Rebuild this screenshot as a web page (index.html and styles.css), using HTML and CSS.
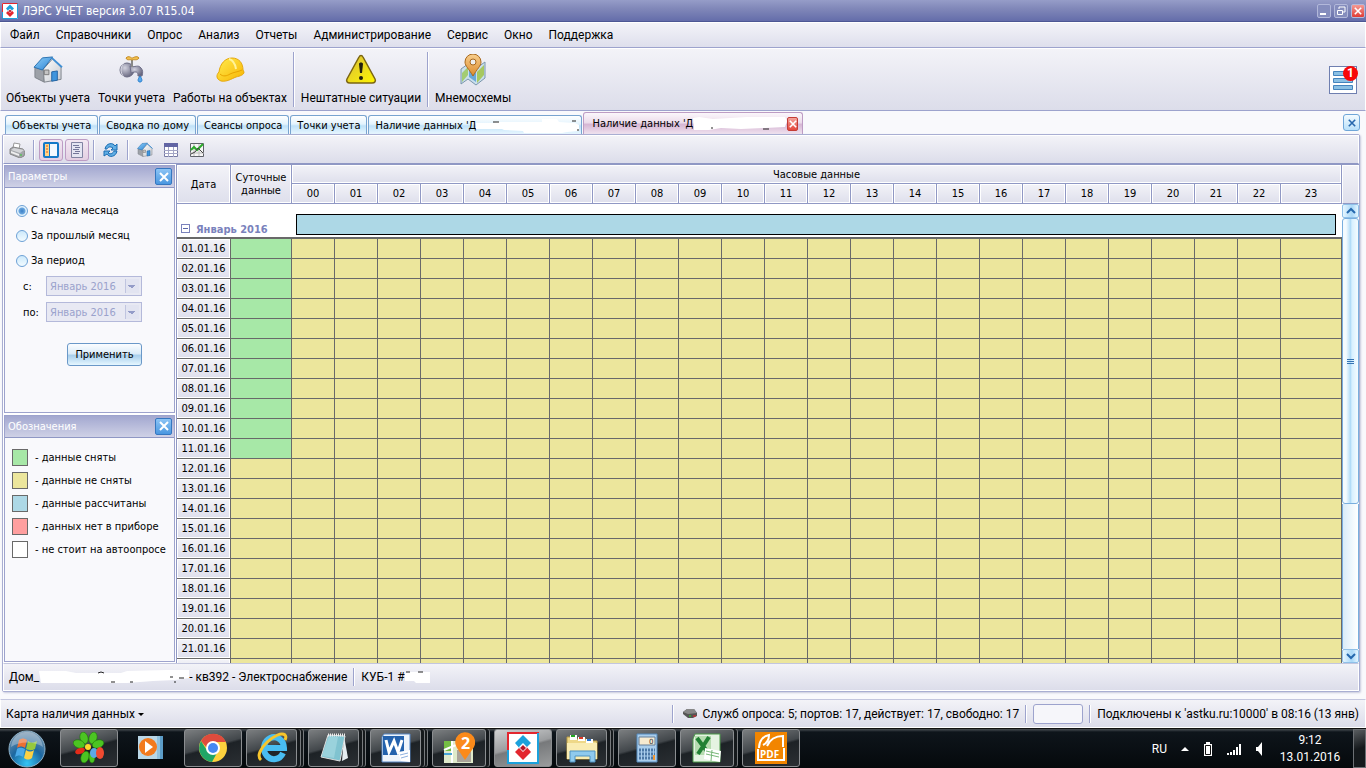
FILE: index.html
```
<!DOCTYPE html>
<html lang="ru">
<head>
    <meta charset="UTF-8">
    <meta name="viewport" content="width=device-width, initial-scale=1.0">
    <title>ЛЭРС УЧЕТ версия 3.07 R15.04</title>
    <link rel="stylesheet" href="styles.css">
</head>
<body>

    <svg class="defs" width="0" height="0" aria-hidden="true">
        <defs>
            <linearGradient id="gBlue" x1="0" y1="0" x2="1" y2="1"><stop offset="0" stop-color="#8fd0f8"/><stop offset="1" stop-color="#2b82d4"/></linearGradient>
            <linearGradient id="gWall" x1="0" y1="0" x2="1" y2="1"><stop offset="0" stop-color="#ffffff"/><stop offset="1" stop-color="#c4c8ce"/></linearGradient>
            <linearGradient id="gYellow" x1="0" y1="0" x2="1" y2="1"><stop offset="0" stop-color="#ffec50"/><stop offset="1" stop-color="#f8b400"/></linearGradient>
            <linearGradient id="gWarn" x1="0" y1="0" x2="1" y2="1"><stop offset="0" stop-color="#d9bd3c"/><stop offset="1" stop-color="#fff600"/></linearGradient>
            <linearGradient id="gOrange" x1="0" y1="0" x2="0" y2="1"><stop offset="0" stop-color="#f8cf8e"/><stop offset="1" stop-color="#dc8a2c"/></linearGradient>
            <radialGradient id="gMetal" cx=".35" cy=".35" r=".7"><stop offset="0" stop-color="#d2d2df"/><stop offset="1" stop-color="#66667e"/></radialGradient>
            <radialGradient id="gOrb" cx=".5" cy=".9" r=".9"><stop offset="0" stop-color="#35c5f5"/><stop offset=".5" stop-color="#1c67a0"/><stop offset="1" stop-color="#7c97ae"/></radialGradient>
            <symbol id="lers" viewBox="0 0 32 32">
                <rect width="32" height="32" fill="#fff"/>
                <path d="M1 32V1h31" fill="none" stroke="#e3262e" stroke-width="2"/>
                <path d="M1 18v13h30V1" fill="none" stroke="#1ba1dc" stroke-width="2"/>
                <path d="M16 3l8 8-4 4-4-4-4 4 2 3-6-7z" fill="#1ba1dc"/>
                <path d="M16 28l-8-8 4-4 4 4 4-4-2-3 6 7z" fill="#e3262e"/>
                <path d="M16 13l3 3-3 3-3-3z" fill="#b5172a"/>
            </symbol>
            <symbol id="house" viewBox="0 0 32 30">
                <path d="M2 12l9 3 1 13-10-5z" fill="#9da1a8" stroke="#7d828a"/>
                <path d="M11 14L21 3l9 9v13l-18 3z" fill="url(#gWall)" stroke="#7d828a"/>
                <path d="M1 12l9-10 11-1-11 14z" fill="url(#gBlue)" stroke="#276fae"/>
                <path d="M20 2l11 10" fill="none" stroke="#3f8fd4" stroke-width="2"/>
                <path d="M20 17l6-1v10l-6 1z" fill="#3f95dd" stroke="#1f62a4"/>
                <path d="M12 15h5v5h-5z" fill="#c4c4c4" stroke="#777"/>
            </symbol>
            <symbol id="cross" viewBox="0 0 10 10">
                <path d="M1 1l8 8M9 1L1 9" fill="none" stroke="currentColor" stroke-width="2"/>
            </symbol>
        </defs>
    </svg>

    <header class="titlebar">
        <svg class="app-icon" width="16" height="16"><use href="#lers"/></svg>
        <span class="app-title">ЛЭРС УЧЕТ версия 3.07 R15.04</span>
        <div class="win-buttons">
            <button class="win-btn" aria-label="Свернуть"><svg width="10" height="10"><path d="M1 8h6" stroke="#fff" stroke-width="2"/></svg></button>
            <button class="win-btn" aria-label="Восстановить"><svg width="10" height="10"><path d="M3 3V1h6v5H7" fill="none" stroke="#fff"/><path d="M1.500 4.500h5v4h-5z" fill="none" stroke="#fff"/></svg></button>
            <button class="win-btn win-close" aria-label="Закрыть"><svg width="8" height="8"><use href="#cross"/></svg></button>
        </div>
    </header>

    <nav class="menu">
        <a href="#">Файл</a>
        <a href="#">Справочники</a>
        <a href="#">Опрос</a>
        <a href="#">Анализ</a>
        <a href="#">Отчеты</a>
        <a href="#">Администрирование</a>
        <a href="#">Сервис</a>
        <a href="#">Окно</a>
        <a href="#">Поддержка</a>
    </nav>

    <div class="toolbar">
        <button class="tool"><svg width="32" height="32"><use href="#house" x="0" y="2" width="32" height="28"/></svg>Объекты учета</button>
        <button class="tool">
            <svg width="32" height="32" viewBox="0 0 32 32">
                <circle cx="11" cy="16" r="7" fill="url(#gMetal)" stroke="#6c6c84"/>
                <path d="M14 12c5 2 8-2 11 2 2 2 2 5 1 8h-4c0-4-1-5-7-3z" fill="url(#gMetal)" stroke="#70708a"/>
                <path d="M8 9c-4 4-4 10 0 14" fill="none" stroke="#dedee8"/>
                <path d="M15 6h2v7h-2z" fill="#888"/>
                <path d="M10 4c3-3 5 0 6 0s5-3 7 0c-2 3-5 1-7 2-2-1-5 1-6-2z" fill="#f3c04e" stroke="#c48a20"/>
                <path d="M24 22c3 4 2 6 0 6s-3-2 0-6z" fill="#56a8f0" stroke="#287dc8"/>
            </svg>Точки учета</button>
        <button class="tool">
            <svg width="32" height="32" viewBox="0 0 32 32">
                <path d="M5 18C6 10 11 4 18 4c7 0 11 5 11 12l1 2c0 3-4 4-8 5-5 2-9 5-15 4-5-2-5-6-2-9z" fill="url(#gYellow)" stroke="#e6a80c"/>
                <path d="M6 20c3 3 7 2 10 0 4-2 8-2 12-4" fill="none" stroke="#e8a400"/>
                <path d="M15 5c4 1 6 4 7 10" fill="none" stroke="#fff39a" stroke-width="2"/>
            </svg>Работы на объектах</button>
        <span class="sep"></span>
        <button class="tool">
            <svg width="32" height="32" viewBox="0 0 32 32">
                <path d="M14 3c1-2 3-2 4 0l12 22c1 2 0 4-3 4H5c-3 0-4-2-3-4z" fill="url(#gWarn)" stroke="#7b6511" stroke-width="1.5"/>
                <path d="M14 10c0-2 4-2 4 0l-1 9h-2z" fill="#221f10"/><circle cx="16" cy="24" r="2" fill="#221f10"/>
            </svg>Нештатные ситуации</button>
        <span class="sep"></span>
        <button class="tool">
            <svg width="32" height="32" viewBox="0 0 32 32">
                <path d="M4 15l7-5 7 5 10-7v16l-9 7-8-6-7 5z" fill="#c9dfed" stroke="#7b96ab"/>
                <path d="M5 19l6-6v8l-6 7z" fill="#a3cc72"/><path d="M12 13l7 6v9l-7-5z" fill="#6aa8d8"/><path d="M20 18l7-7v10l-7 8z" fill="#a6c860"/>
                <path d="M16 22C12 15 8 12 8 8a8 8 0 0 1 16 0c0 4-4 7-8 14z" fill="url(#gOrange)" stroke="#a8691e"/>
                <circle cx="16" cy="8" r="3" fill="#eee" stroke="#a8691e"/>
            </svg>Мнемосхемы</button>
        <button class="notices" aria-label="Уведомления">
            <svg width="22" height="22" viewBox="0 0 22 22"><g fill="#8ac0e4" stroke="#4484bd"><path d="M1.500 2.500h19v4h-19zM1.500 9.500h19v4h-19zM1.500 16.500h19v4h-19z"/></g></svg>
            <span class="badge">1</span>
        </button>
    </div>

    <div class="tabs">
        <button class="tab">Объекты учета</button>
        <button class="tab">Сводка по дому</button>
        <button class="tab">Сеансы опроса</button>
        <button class="tab">Точки учета</button>
        <button class="tab tab-wide">Наличие данных 'Д
            <svg class="smudge" width="106" height="16" viewBox="0 0 106 16">
                <path d="M0 6h18l2-1h46V2h15l2 3 16 1 4 2v6l-12 1-5 1H48l-1-2-19-1-2-1H0z" fill="#fff"/>
                <path d="M17 5h6M96 4h4M102 12v2" stroke="#222"/>
            </svg>
        </button>
        <button class="tab tab-active">Наличие данных 'Д
            <svg class="smudge" width="94" height="14" viewBox="0 0 94 14">
                <path d="M0 1l6-1 14 2 34-2h38l2 4-2 6-20 1-24 1-20-1-12 2H1z" fill="#fff"/>
                <path d="M19 10v2M70 12h6" stroke="#222"/>
            </svg>
            <span class="tab-close"><svg width="8" height="8"><use href="#cross"/></svg></span>
        </button>
        <button class="close-all" aria-label="Закрыть вкладку"><svg width="8" height="8"><use href="#cross"/></svg></button>
    </div>

    <main class="doc">
        <div class="doc-tools">
            <button class="mini" aria-label="Печать">
                <svg width="16" height="16"><path d="M4 6l1-5 6 1-1 5z" fill="#fff" stroke="#999"/><path d="M1 7l3-2 10 2 2 3-1 4-4 2-10-4z" fill="#a3a5aa" stroke="#888"/><path d="M2 8l9 3 4-3-10-2z" fill="#d4d5d8"/><path d="M2 11l8 3v-2l-8-3z" fill="#eee"/><path d="M11 13h2" stroke="#3c3"/></svg>
            </button>
            <span class="sep"></span>
            <button class="mini pressed" aria-label="Параметры">
                <svg width="16" height="16"><rect x="1" y="1" width="14" height="14" rx="1" fill="#f3f9ff" stroke="#1479c8" stroke-width="2"/><path d="M2 2h4v12H2z" fill="#ffd486"/><path d="M6.500 2v12" stroke="#1479c8"/><path d="M3 4h2M3 7h2M3 10h2" stroke="#e15b1e"/></svg>
            </button>
            <button class="mini pressed" aria-label="Обозначения">
                <svg width="16" height="16"><path d="M2.500.5h11v15h-11z" fill="#e4e5f2" stroke="#8083a2"/><path d="M4 3.500h6M6 5.500h5M4 7.500h6M6 9.500h5M4 11.500h6" stroke="#73769a"/></svg>
            </button>
            <span class="sep"></span>
            <button class="mini" aria-label="Обновить">
                <svg width="16" height="16"><path d="M2 7c1-6 8-7 10-3l2-2v6H8l2-2C7 4 5 5 4 7z" fill="#61aee4" stroke="#1b6cb2"/><path d="M14 9c-1 6-8 7-10 3l-3 2V9h6l-2 2c3 2 5 0 6-2z" fill="#61aee4" stroke="#1b6cb2"/></svg>
            </button>
            <span class="sep"></span>
            <button class="mini" aria-label="Объект"><svg width="16" height="16"><use href="#house"/></svg></button>
            <button class="mini mini-gap" aria-label="Таблица">
                <svg width="16" height="16"><path d="M1.500 1.500h13v13h-13z" fill="#fff" stroke="#777aa5"/><path d="M1 1h14v4H1z" fill="#6265a4"/><path d="M1 8.500h14M1 11.500h14M5.500 5v10M10.500 5v10" stroke="#a4a6c6"/></svg>
            </button>
            <button class="mini mini-gap" aria-label="График">
                <svg width="16" height="16"><path d="M1.500 1.500h13v13h-13z" fill="#f7f7f7" stroke="#60636b"/><path d="M1 11h14M5 2v12M10 2v12" stroke="#bbb"/><path d="M2 8l3-3 3 3 6-6" fill="none" stroke="#2bab2b" stroke-width="2"/><path d="M2 12l4-2 3-4 5 5" fill="none" stroke="#444"/></svg>
            </button>
        </div>

        <div class="workspace">
            <aside class="sidebar">
                <section class="panel">
                    <h2>Параметры <button class="panel-close" aria-label="Закрыть"><svg width="10" height="10"><use href="#cross"/></svg></button></h2>
                    <form class="params">
                        <label class="radio"><input type="radio" name="period" checked>С начала месяца</label>
                        <label class="radio"><input type="radio" name="period">За прошлый месяц</label>
                        <label class="radio"><input type="radio" name="period">За период</label>
                        <div class="month">
                            <label for="from">с:</label>
                            <select id="from" disabled><option>Январь 2016</option></select>
                        </div>
                        <div class="month">
                            <label for="to">по:</label>
                            <select id="to" disabled><option>Январь 2016</option></select>
                        </div>
                        <button type="button" class="apply">Применить</button>
                    </form>
                </section>
                <section class="panel">
                    <h2>Обозначения <button class="panel-close" aria-label="Закрыть"><svg width="10" height="10"><use href="#cross"/></svg></button></h2>
                    <ul class="legend">
                        <li><i class="taken"></i>- данные сняты</li>
                        <li><i class="missing"></i>- данные не сняты</li>
                        <li><i class="computed"></i>- данные рассчитаны</li>
                        <li><i class="absent"></i>- данных нет в приборе</li>
                        <li><i></i>- не стоит на автоопросе</li>
                    </ul>
                </section>
            </aside>

            <div class="grid-area">
                <table id="tabla">
                    <colgroup id="cols"><col class="col-date"><col class="col-day"></colgroup>
                    <thead>
                        <tr>
                            <th rowspan="2">Дата</th>
                            <th rowspan="2">Суточные данные</th>
                            <th colspan="24">Часовые данные</th>
                        </tr>
                        <tr id="hours"></tr>
                    </thead>
                    <tbody id="days">
                        <tr class="group">
                            <td colspan="26">
                                <div class="group-row">
                                    <button class="expander" aria-label="Свернуть группу"></button>
                                    <span>Январь 2016</span>
                                    <div class="group-bar"></div>
                                </div>
                            </td>
                        </tr>
                    </tbody>
                </table>
            </div>

            <div class="scroll">
                <div class="scroll-corner"></div>
                <button class="scroll-btn" aria-label="Вверх"><svg width="10" height="8"><path d="M1 6l4-4 4 4" fill="none" stroke="#2568ae" stroke-width="2"/></svg></button>
                <div class="scroll-thumb"></div>
                <div class="scroll-track"></div>
                <button class="scroll-btn" aria-label="Вниз"><svg width="10" height="8"><path d="M1 2l4 4 4-4" fill="none" stroke="#2568ae" stroke-width="2"/></svg></button>
            </div>
        </div>

        <div class="doc-status">
            <span>Дом_</span>
            <svg width="150" height="14" viewBox="0 0 150 14">
                <path d="M0 1h27l10 2h45l6-2 40-1h22v8l-14 2-22 1-26 2H2z" fill="#fff"/>
                <path d="M59 3l3-1 3 1M72 12h4M91 12h3M131 7h3M140 8h5M136 11v2" fill="none" stroke="#222"/>
            </svg>
            <span>- кв392 - Электроснабжение</span>
            <span class="sep"></span>
            <span>КУБ-1 #</span>
            <svg width="26" height="14" viewBox="0 0 26 14">
                <path d="M0 3l6-1h19v11H11l-2-2H0z" fill="#fff"/><path d="M1 2h4M13 2h5" stroke="#222"/>
            </svg>
        </div>
    </main>

    <footer class="statusbar">
        <button class="view-menu">Карта наличия данных <i class="caret"></i></button>
        <span class="sep push"></span>
        <svg class="modem" width="14" height="10"><path d="M0 3l4-3h7l3 4v3l-4 2H5L0 5z" fill="#555"/><path d="M0 3l4-3h7l3 4-9 1z" fill="#888"/><path d="M6 7h2" stroke="#2d2"/><path d="M10 7h3" stroke="#e22"/></svg>
        <span>Служб опроса: 5; портов: 17, действует: 17, свободно: 17</span>
        <span class="sep"></span>
        <span class="progress"></span>
        <span class="sep"></span>
        <span>Подключены к 'astku.ru:10000' в 08:16 (13 янв)</span>
    </footer>

    <div class="taskbar">
        <button class="start" aria-label="Пуск">
            <svg width="38" height="38" viewBox="0 0 38 38"><circle cx="19" cy="19" r="18" fill="url(#gOrb)" stroke="#8fb3c9"/>
                <path d="M11 10c3-2 5-2 8 0l-2 8c-3-2-5-2-8 0z" fill="#ed6f32"/><path d="M20 11c3 2 5 2 9 0l-2 8c-4 2-6 1-9 0z" fill="#95c83d"/>
                <path d="M9 19c3-2 5-1 8 0l-2 8c-3-2-5-2-8 0z" fill="#4ba9e8"/><path d="M18 20c3 2 5 2 8 0l-2 8c-3 2-5 2-8 0z" fill="#fcd144"/>
                <path d="M3 17C5 4 14 2 19 2s14 2 16 15C27 11 11 11 3 17z" fill="#fff" opacity=".3"/></svg>
        </button>
        <button class="task" aria-label="ICQ">
            <svg width="32" height="32" viewBox="0 0 32 32"><g fill="#4cc422" stroke="#167005" stroke-width=".5"><ellipse cx="11" cy="6" rx="4" ry="6" transform="rotate(-15 11 6)"/><ellipse cx="20" cy="6" rx="4" ry="6" transform="rotate(15 20 6)"/><ellipse cx="25" cy="12" rx="4" ry="6" transform="rotate(70 25 12)"/><ellipse cx="6" cy="12" rx="4" ry="6" transform="rotate(-70 6 12)"/><ellipse cx="12" cy="25" rx="4" ry="6" transform="rotate(20 12 25)"/><ellipse cx="19" cy="25" rx="3" ry="6"/></g><ellipse cx="7" cy="19" rx="5" ry="3" fill="#e42b19" transform="rotate(-20 7 19)"/><circle cx="15" cy="15" r="3" fill="#ffd62a"/><ellipse cx="21" cy="21" rx="4" ry="5" fill="#5ca8e8"/><ellipse cx="27" cy="21" rx="4" ry="6" fill="#f04a30"/></svg>
        </button>
        <button class="task plain" aria-label="Проигрыватель">
            <svg width="28" height="26" viewBox="0 0 28 26"><path d="M7 1h19v23H7z" fill="#5c9dc8"/><path d="M4 1h19v23H4z" fill="#91c2df"/><path d="M1 1h19v23H1z" fill="#bad7e7"/><circle cx="11" cy="12" r="9" fill="#f27a1e"/><path d="M8 6l8 6-8 6z" fill="#fff"/></svg>
        </button>
        <button class="task" aria-label="Chrome">
            <svg width="30" height="30" viewBox="0 0 30 30"><circle cx="15" cy="15" r="14" fill="#fdd23e"/><path d="M3 8a14 14 0 0 1 25 1H15l-6 6z" fill="#de4b3d"/><path d="M3 8a14 14 0 0 0 11 21l6-11-10 1z" fill="#20a566"/><circle cx="15" cy="15" r="7" fill="#fff"/><circle cx="15" cy="15" r="5" fill="#4688f1"/></svg>
        </button>
        <button class="task stack" aria-label="Internet Explorer">
            <svg width="32" height="32" viewBox="0 0 32 32"><path d="M27 21A10 11 0 1 1 28 16H10" fill="none" stroke="#49bdf2" stroke-width="6"/><path d="M5 28C-4 20 22-3 29 3c1 1 1 3 0 5" fill="none" stroke="#f7c52b" stroke-width="3"/></svg>
        </button>
        <button class="task stack" aria-label="Блокнот">
            <svg width="32" height="32" viewBox="0 0 32 32"><path d="M26 4l4 22-6 3z" fill="#e6edf0"/><path d="M10 3l17 1-5 25-19-4z" fill="#80c3d0" stroke="#ddd"/><path d="M11 4l9 1-4 21-12-2z" fill="#b4e1e8" opacity=".5"/><path d="M10 3h17" stroke="#eee" stroke-width="3" stroke-dasharray="1 1"/></svg>
        </button>
        <button class="task stack" aria-label="Word">
            <svg width="30" height="30" viewBox="0 0 30 30"><path d="M3 1h26v28H1V4z" fill="#eef4fb" stroke="#5786c3"/><path d="M2 3h21v19H2z" fill="#2462ad"/><path d="M5 7l3 12 5-11 4 11 4-12" fill="none" stroke="#fff" stroke-width="3"/><path d="M17 19l12-2v12l-9-1z" fill="#fff"/><path d="M19 22l8-2M20 25l7-2" stroke="#8fb1df"/></svg>
        </button>
        <button class="task stack stack-one" aria-label="2ГИС">
            <svg width="32" height="32" viewBox="0 0 32 32"><path d="M1 9h29v22H1z" fill="#dfeacb"/><path d="M1 9h9v10H1z" fill="#75be44"/><path d="M1 18l12-5M9 31V9" stroke="#fff" stroke-width="2"/><path d="M1 22h8" stroke="#49a5d8" stroke-width="2"/><path d="M14 18h14v12H14z" fill="#aaa399"/><path d="M22 28l-8-12a10 10 0 1 1 17-1z" fill="#fb8a1a"/><text x="18" y="17" class="gis">2</text></svg>
        </button>
        <button class="task current" aria-label="ЛЭРС УЧЕТ"><svg width="32" height="32"><use href="#lers"/></svg></button>
        <button class="task stack" aria-label="Проводник">
            <svg width="32" height="30" viewBox="0 0 32 30"><path d="M1 4h8l2 2h9l1 2h10v18H1z" fill="#eed888" stroke="#b99b44"/><path d="M4 2h7v5H4zM12 4h7v4h-7zM20 6h7v4h-7z" fill="#fff"/><path d="M5 3h4" stroke="#23a823" stroke-width="2"/><path d="M13 5h4" stroke="#dc3826" stroke-width="2"/><path d="M21 7h4" stroke="#2a75d0" stroke-width="2"/><path d="M1 10h30v16H1z" fill="#f9ecb2"/><path d="M4 29V18h25v11h-5v-6H9v6z" fill="#8fcaee" stroke="#4e92c2"/></svg>
        </button>
        <button class="task" aria-label="Калькулятор">
            <svg width="22" height="30" viewBox="0 0 22 30"><path d="M1 1h20v28H1z" fill="#a9cdec" stroke="#558abc"/><path d="M3 4h16v8H3z" fill="#f7ead0" stroke="#657f99"/><text x="13" y="11" class="calc">0</text><path d="M3 17h16M3 21h16M3 25h16" stroke="#4c78a6" stroke-width="3" stroke-dasharray="2 1"/><path d="M17 22h2v5h-2z" fill="#f09733"/></svg>
        </button>
        <button class="task stack stack-one" aria-label="Excel">
            <svg width="30" height="30" viewBox="0 0 30 30"><path d="M3 1h25v28H1V6z" fill="#e5f3e2" stroke="#4c9a4a"/><path d="M3 3h16v19H3z" fill="#b6dcb0"/><path d="M5 5l12 16M17 4L6 21" stroke="#218034" stroke-width="4"/><path d="M13 15l16 3-1 11-16-3z" fill="#fff"/><path d="M14 18l13 3M14 21l13 3M20 17l-1 11" stroke="#78b779"/></svg>
        </button>
        <button class="task" aria-label="PDF">
            <svg width="32" height="32" viewBox="0 0 32 32"><rect width="32" height="32" fill="#f28500"/><path d="M4 16C4 9 8 4 14 3c0 5-2 8-6 10M12 14C15 7 20 4 28 4v11" fill="none" stroke="#fff" stroke-width="2"/><path d="M3 17v11h26V16" fill="none" stroke="#fff" stroke-width="2"/><text x="5" y="26" class="pdf">PDF</text></svg>
        </button>

        <div class="tray">
            <span class="lang">RU</span>
            <svg width="8" height="4"><path d="M0 4l4-4 4 4z" fill="#fff"/></svg>
            <svg width="10" height="14"><path d="M3 0h4v2h2v12H1V2h2z" fill="#fff"/><path d="M2.500 3.500h5v9h-5z" fill="#fff" stroke="#111"/></svg>
            <svg width="14" height="12"><path d="M1 12v-2M4 12V9M7 12V7M10 12V4M13 12V1" stroke="#fff" stroke-width="2"/></svg>
            <svg width="8" height="14"><path d="M1 5h2l4-5v14L3 9H1z" fill="#fff"/></svg>
        </div>
        <div class="clock"><span>9:12</span><span>13.01.2016</span></div>
        <button class="show-desktop" aria-label="Свернуть все окна"></button>
    </div>

    <script>
        const cols = document.getElementById('cols');
        const hours = document.getElementById('hours');
        const days = document.getElementById('days');

        for (let h = 0; h < 24; h++) {
            cols.insertAdjacentHTML('beforeend', `<col class="${h < 23 ? 'col-hour' : 'col-last'}">`);
            hours.insertAdjacentHTML('beforeend', `<th>${String(h).padStart(2, '0')}</th>`);
        }

        // суточные данные сняты по 11 января включительно
        for (let d = 1; d <= 22; d++) {
            const tr = document.createElement('tr');
            const fecha = d <= 21 ? `${String(d).padStart(2, '0')}.01.16` : '';
            tr.innerHTML = `<th>${fecha}</th>`
                + `<td class="${d <= 11 ? 'taken' : 'missing'}"></td>`
                + '<td class="missing"></td>'.repeat(24);
            days.appendChild(tr);
        }
    </script>

</body>
</html>
```
FILE: styles.css
```
* {
    box-sizing: border-box;
}

body {
    margin: 0;
    height: 100vh;
    display: flex;
    flex-direction: column;
    overflow: hidden;
    background: #f9f9fc;
    color: #000;
    font-family: "DejaVu Sans Condensed", "DejaVu Sans", sans-serif;
    font-size: 11px;
}

button {
    font: inherit;
    color: inherit;
    margin: 0;
    padding: 0;
    border: none;
    background: none;
    white-space: nowrap;
}

svg {
    display: block;
    flex: none;
}

.defs {
    position: absolute;
}

.sep {
    flex: none;
    width: 2px;
    background: #9da3cd;
    border-right: 1px solid #fff;
}

/* заголовок окна */
.titlebar {
    flex: none;
    display: flex;
    align-items: center;
    height: 22px;
    padding: 0 1px 0 2px;
    background: linear-gradient(#969dc8, #8188b9 40%, #646daa);
    border-bottom: 1px solid #4d5794;
    color: #fff;
    font-size: 12px;
}

.app-title {
    margin-left: 4px;
}

.win-buttons {
    display: flex;
    gap: 3px;
    margin-left: auto;
}

.win-btn {
    width: 14px;
    height: 14px;
    display: grid;
    place-items: center;
    border: 1px solid #b2b8da;
    border-radius: 2px;
    background: #858dbd;
    color: #fff;
}

.win-close {
    background: linear-gradient(#f49a94, #e03c35);
}

.menu {
    flex: none;
    display: flex;
    align-items: center;
    gap: 16px;
    height: 26px;
    padding: 0 9px;
    background: linear-gradient(#f3f3f8, #dedfec);
    border: 1px solid #fff;
    border-bottom: 1px solid #9da3cd;
    font-family: Roboto, "Noto Sans", sans-serif;
    font-size: 12px;
}

.menu a {
    color: #000;
    text-decoration: none;
}

.toolbar {
    flex: none;
    display: flex;
    height: 63px;
    padding: 3px 8px 3px 1px;
    background: linear-gradient(#f3f3f8, #dcddea);
    border: 1px solid #fff;
    border-bottom: 1px solid #9da3cd;
    font-family: Roboto, "Noto Sans", sans-serif;
    font-size: 12px;
}

.toolbar .sep {
    margin: 0 2px;
}

.tool {
    display: flex;
    flex-direction: column;
    align-items: center;
    gap: 5px;
    padding: 2px 4px 0;
}

.notices {
    position: relative;
    width: 28px;
    height: 28px;
    display: grid;
    place-items: center;
    align-self: center;
    margin-left: auto;
    border: 1px solid #6f7fb0;
    background: #fff;
}

.badge {
    position: absolute;
    top: -1px;
    right: -2px;
    width: 15px;
    height: 15px;
    border-radius: 50%;
    background: #f80808;
    color: #fff;
    font-weight: bold;
    line-height: 15px;
}

/* вкладки */
.tabs {
    flex: none;
    display: flex;
    align-items: flex-end;
    gap: 1px;
    height: 23px;
    padding: 0 6px 0 5px;
}

.tab {
    display: flex;
    align-items: center;
    height: 19px;
    padding: 0 6px;
    border: 1px solid #78a4d0;
    border-bottom: none;
    border-radius: 3px 3px 0 0;
    background: linear-gradient(#fff, #e3f3fd 45%, #bfe1f8 55%, #e8f7ff);
}

.tab-wide {
    width: 214px;
    padding-right: 0;
}

.tab-active {
    width: 220px;
    height: 22px;
    padding: 0 4px 0 8px;
    border-color: #bd9cc4;
    background: linear-gradient(#fbf7fb, #ecdceb 45%, #d6b7d4 55%, #f0e2ef);
}

.tab-close {
    display: grid;
    place-items: center;
    width: 15px;
    height: 14px;
    margin-left: auto;
    border: 1px solid #c43c35;
    border-radius: 2px;
    background: linear-gradient(#f3a39b, #e5473b);
    color: #fff;
}

.close-all {
    display: grid;
    place-items: center;
    width: 17px;
    height: 17px;
    align-self: center;
    margin-left: auto;
    border: 1px solid #6fa6d8;
    border-radius: 3px;
    background: linear-gradient(#f4fbff, #b8e0fa);
    color: #2667ad;
}

/* документ */
.doc {
    flex: 1;
    min-height: 0;
    display: flex;
    flex-direction: column;
    margin: 0 6px 7px 2px;
    border: 1px solid #a9aed2;
    border-radius: 2px;
    background: #fff;
    box-shadow: 1px 1px 2px #c8cade;
}

.doc-tools {
    flex: none;
    display: flex;
    align-items: center;
    height: 29px;
    padding: 0 1px;
    background: linear-gradient(#f3f3f8, #dcddea);
    border: 1px solid #fff;
    border-bottom: 1px solid #8f97c4;
}

.doc-tools .sep {
    height: 20px;
    margin: 0 4px;
}

.mini {
    display: grid;
    place-items: center;
    width: 24px;
    height: 22px;
}

.pressed {
    border: 1px solid #bd9cc4;
    border-radius: 3px;
    background: linear-gradient(#f3e8f3, #e3cfe2);
}

.mini-gap,
.pressed + .pressed {
    margin-left: 2px;
}

.workspace {
    flex: 1;
    min-height: 0;
    display: flex;
}

.sidebar {
    flex: none;
    display: flex;
    flex-direction: column;
    gap: 2px;
    width: 172px;
    padding: 1px 0 1px 1px;
}

.panel {
    flex: 1;
    border: 1px solid #9da3cd;
    background: #f9f9fc;
}

.panel h2 {
    display: flex;
    align-items: center;
    justify-content: space-between;
    height: 22px;
    margin: 0;
    padding: 0 2px 0 3px;
    background: linear-gradient(#a3a8d0, #cfd1e6);
    border-bottom: 1px solid #8f97c4;
    color: #fff;
    font-size: 11px;
    font-weight: normal;
}

.panel-close {
    display: grid;
    place-items: center;
    width: 17px;
    height: 17px;
    border: 1px solid #3577c0;
    border-radius: 2px;
    background: linear-gradient(#8cc4f5, #4a97e0);
    color: #fff;
}

.params {
    display: flex;
    flex-direction: column;
    padding: 10px 0 0 11px;
}

.radio {
    display: flex;
    align-items: center;
    height: 25px;
}

.radio input {
    appearance: none;
    width: 12px;
    height: 12px;
    margin: 0 3px 0 0;
    border: 1px solid #6da1d6;
    border-radius: 50%;
    background: linear-gradient(#cde9fb, #f2fbff);
}

.radio input:checked {
    background: radial-gradient(#3b7fc6 0, #6aa6de 3px, #e3f3fd 4px);
}

.month {
    display: flex;
    align-items: center;
    height: 26px;
    padding-left: 7px;
}

.month label {
    width: 23px;
}

.month select {
    appearance: none;
    width: 96px;
    height: 20px;
    padding: 0 3px;
    border: 1px solid #b4b9da;
    border-radius: 0;
    background:
        linear-gradient(45deg, transparent 50%, #949cc8 50%) 81px 8px / 4px 4px no-repeat,
        linear-gradient(-45deg, transparent 50%, #949cc8 50%) 85px 8px / 4px 4px no-repeat,
        linear-gradient(90deg, #c0c5e0 1px, #e2e4f1 1px) 78px 2px / 14px 14px no-repeat,
        #e8e9f3;
    color: #9aa2cc;
    font: inherit;
    opacity: 1;
}

.apply {
    width: 75px;
    height: 23px;
    margin: 18px 0 0 51px;
    border: 1px solid #6a98c8;
    border-radius: 3px;
    background: linear-gradient(#fbfdff, #dcecf8 45%, #a9cfec 55%, #e6f7ff);
}

.legend {
    margin: 0;
    padding: 8px 0 0 7px;
    list-style: none;
}

.legend li {
    display: flex;
    align-items: center;
    gap: 7px;
    height: 23px;
    white-space: nowrap;
}

.legend i {
    width: 16px;
    height: 17px;
    border: 1px solid #696969;
    background-color: #fff;
}

.legend .taken,
.taken {
    background-color: #a7e8a7;
}

.legend .missing,
.missing {
    background-color: #ece69c;
}

.legend .computed {
    background-color: #add8e6;
}

.legend .absent {
    background-color: #ff9f9f;
}

/* таблица */
.grid-area {
    flex: 1;
    min-width: 0;
    overflow: hidden;
    margin-left: 1px;
    border-top: 1px solid #9098c4;
    border-left: 1px solid #9098c4;
}

table {
    width: 100%;
    table-layout: fixed;
    border-collapse: separate;
    border-spacing: 0;
}

.col-date {
    width: 54px;
}

.col-day {
    width: 61px;
}

.col-hour {
    width: 43px;
}

th, td {
    height: 20px;
    padding: 0;
    border-right: 1px solid #696969;
    border-bottom: 1px solid #696969;
    text-align: center;
}

th {
    background: linear-gradient(#f3f3f8, #dedfec);
    box-shadow: inset 0 0 0 1px #fff;
    font-weight: normal;
    line-height: 13px;
}

thead th {
    border-color: #9098c4;
}

thead tr:first-child th {
    height: 19px;
}

.group td {
    height: 35px;
    border-bottom: 2px solid #696969;
    border-right: none;
}

.group-row {
    display: flex;
    align-items: flex-end;
    height: 33px;
    padding: 0 6px 2px 4px;
    color: #7a82bc;
    font-weight: bold;
}

.group-row span {
    width: 100px;
    text-align: left;
    line-height: 10px;
}

.expander {
    width: 9px;
    height: 9px;
    margin: 0 6px 2px 0;
    border: 1px solid #7a82bc;
    background: linear-gradient(#5b66a8, #5b66a8) center / 5px 1px no-repeat;
}

.group-bar {
    flex: 1;
    height: 21px;
    border: 1px solid #000;
    background: #add8e6;
}

.scroll {
    flex: none;
    display: flex;
    flex-direction: column;
    width: 17px;
    border-top: 1px solid #9098c4;
}

.scroll-corner {
    height: 39px;
    background: linear-gradient(#f3f3f8, #dedfec);
    border: 1px solid #fff;
    border-bottom: 1px solid #9098c4;
}

.scroll-btn {
    display: grid;
    place-items: center;
    height: 14px;
    border: 1px solid #8fc0e8;
    border-radius: 2px;
    background: linear-gradient(90deg, #e6f6ff, #a9d8f8 60%, #e6f6ff);
}

.scroll-thumb {
    flex: 286;
    border: 1px solid #79aede;
    border-radius: 3px;
    background:
        repeating-linear-gradient(#3574b4 0 1px, transparent 1px 2px) center / 7px 5px no-repeat,
        linear-gradient(90deg, #f4fbff 20%, #b2dcf8 50%, #d7f0ff 60%, #f4fbff);
}

.scroll-track {
    flex: 146;
    border: solid #79aede;
    border-width: 0 1px;
    background: linear-gradient(90deg, #d9ecf9, #fff);
}

.doc-status {
    flex: none;
    display: flex;
    align-items: center;
    height: 28px;
    padding: 0 5px;
    background: linear-gradient(#f3f3f8, #dcddea);
    border: 1px solid #fff;
    border-top: 1px solid #c3c6de;
    font-family: Roboto, "Noto Sans", sans-serif;
    font-size: 12px;
}

.doc-status .sep,
.statusbar .sep {
    height: 18px;
    margin: 0 6px;
}

/* строка состояния */
.statusbar {
    flex: none;
    display: flex;
    align-items: center;
    height: 29px;
    padding: 0 6px 0 5px;
    background: linear-gradient(#f3f3f8, #dcddea);
    border: 1px solid #fff;
    border-top: 1px solid #c3c6de;
    font-family: Roboto, "Noto Sans", sans-serif;
    font-size: 12px;
}

.caret {
    display: inline-block;
    vertical-align: middle;
    border: 3px solid transparent;
    border-top-color: #000;
    border-bottom: none;
}

.statusbar .push {
    margin-left: auto;
}

.modem {
    margin: 0 5px 0 3px;
}

.progress {
    width: 50px;
    height: 20px;
    border: 1px solid #9da3cd;
    border-radius: 3px;
    background: #f6f6fa;
}

/* панель задач */
.taskbar {
    flex: none;
    display: flex;
    gap: 4px;
    height: 40px;
    padding-left: 8px;
    background: linear-gradient(#4b5156, #0e151b 3px, #05090c);
    border-top: 1px solid #111;
    color: #fff;
    font-family: Roboto, "Noto Sans", sans-serif;
    font-size: 12px;
}

.start {
    width: 48px;
}

.task {
    flex: none;
    display: grid;
    place-items: center;
    width: 58px;
    height: 38px;
    border: 1px solid #8b8e91;
    border-radius: 3px;
    background: linear-gradient(165deg, #7b7e80, #42474b 45%, #1d2226 50%, #2b2f33);
}

.plain {
    border: none;
    background: none;
}

.stack {
    width: 51px;
    margin-right: 7px;
    box-shadow: 3px 0 0 #15191c, 4px 0 0 #777a7d, 6px 0 0 #15191c, 7px 0 0 #777a7d;
}

.stack-one {
    width: 54px;
    margin-right: 4px;
    box-shadow: 3px 0 0 #15191c, 4px 0 0 #777a7d;
}

.current {
    background: linear-gradient(165deg, #d0d2d3, #9b9d9f 45%, #77797b 50%, #9a9c9d);
}

.gis {
    fill: #fff;
    font: bold 16px "Open Sans", sans-serif;
}

.calc {
    fill: #333;
    font: 7px "DejaVu Sans", sans-serif;
}

.pdf {
    fill: #fff;
    font: bold 10px "Open Sans", sans-serif;
}

.tray {
    display: flex;
    align-items: center;
    gap: 14px;
    margin-left: auto;
}

.clock {
    display: flex;
    flex-direction: column;
    align-items: center;
    justify-content: center;
    width: 78px;
    margin-left: 4px;
    line-height: 17px;
}

.show-desktop {
    width: 13px;
    border: 1px solid #6c7074;
    background: linear-gradient(160deg, #595d60, #15191c 50%);
}
```
